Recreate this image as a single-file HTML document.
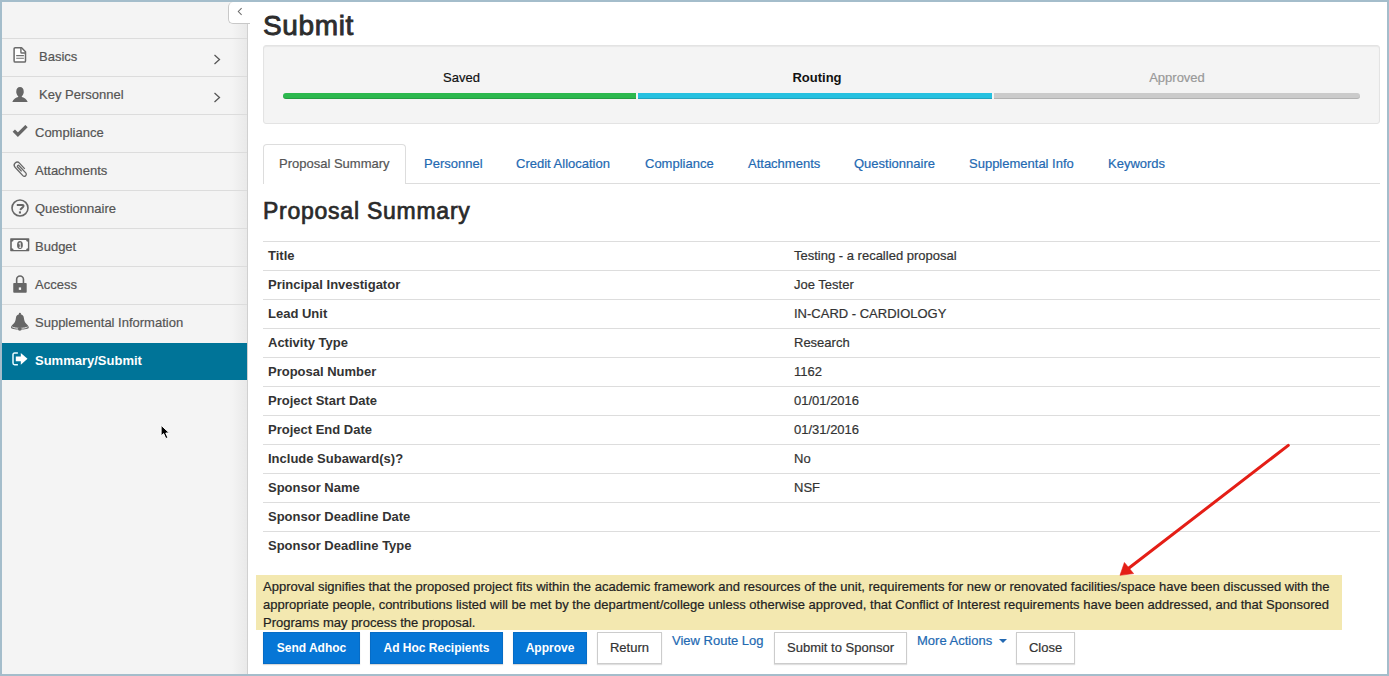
<!DOCTYPE html>
<html><head><meta charset="utf-8">
<style>
*{box-sizing:border-box;margin:0;padding:0}
html,body{width:1389px;height:676px;overflow:hidden}
body{position:relative;background:#a4bdcb;font-family:"Liberation Sans",sans-serif;font-size:13px;color:#333;-webkit-text-stroke:0.2px currentColor}
b,.bp,.act,.bold{-webkit-text-stroke:0}
.a{position:absolute}
#frame{left:2px;top:2px;width:1385px;height:672px;background:#fff}
#side{left:2px;top:2px;width:246px;height:672px;background:linear-gradient(to right,#f4f4f4 0,#f4f4f4 230px,#e9e9e9 245px);border-right:1px solid #d0d0d0}
.sep{left:2px;width:245px;height:1px;background:#dcdcdc}
.it{left:2px;width:245px;height:38px;line-height:38px;color:#555;white-space:nowrap}
.it span{position:absolute;top:0}
.it svg{position:absolute}
.act{background:#007498;color:#fff;font-weight:bold}
.chev{position:absolute}
#collapse{left:228px;top:2px;width:22px;height:22px;background:#fff;border:1px solid #c8c8c8;border-right:none;border-radius:5px 0 0 5px;border-top:none}
h1{position:absolute;left:263px;top:7.5px;font-size:28px;font-weight:normal;-webkit-text-stroke:0.9px #2d2d2d;color:#2d2d2d;line-height:36px;letter-spacing:0.65px}
#well{left:263px;top:45px;width:1117px;height:79px;background:#f4f4f4;border:1px solid #e3e3e3;border-radius:3px;box-shadow:inset 0 1px 1px rgba(0,0,0,.05)}
.bar{top:93px;height:6px}
.lbl{top:69px;line-height:18px;text-align:center;font-size:13px}
.tabline{left:263px;top:183px;width:1117px;height:1px;background:#ddd}
.tab{top:145px;height:40px;line-height:40px;color:#2369b2;white-space:nowrap}
#acttab{left:263px;top:144px;width:143px;height:40px;background:#fff;border:1px solid #ddd;border-bottom:none;border-radius:4px 4px 0 0;color:#555;padding-left:15px}
h2{position:absolute;left:263px;top:196px;font-size:23px;font-weight:normal;-webkit-text-stroke:0.7px #2a2a2a;color:#2a2a2a;line-height:30px;letter-spacing:0.75px}
.row{left:263px;width:1117px;height:29px;border-top:1px solid #ddd;line-height:28px;color:#333}
.row b{position:absolute;left:5px;top:0}
.row i{position:absolute;left:531px;top:0;font-style:normal}
#notice{left:256px;top:575px;width:1086px;height:55px;background:#f3e8b0;color:#222;padding:3px 0 0 7px;line-height:18px}
.btn{top:632px;height:32px;line-height:30px;text-align:center;white-space:nowrap}
.bp{background:#0676d6;color:#fff;font-weight:bold;font-size:12px;border:1px solid #066cc6;box-shadow:0 1px 1px rgba(0,0,0,.15)}
.bd{background:#fff;color:#333;border:1px solid #ccc;box-shadow:0 1px 1px rgba(0,0,0,.12)}
.lnk{top:632px;line-height:17px;color:#2369b2;white-space:nowrap}
</style></head><body>
<div id="frame" class="a"></div>
<div id="side" class="a"></div>
<!-- sidebar separators -->
<div class="a sep" style="top:38px"></div>
<div class="a sep" style="top:76px"></div>
<div class="a sep" style="top:114px"></div>
<div class="a sep" style="top:152px"></div>
<div class="a sep" style="top:190px"></div>
<div class="a sep" style="top:228px"></div>
<div class="a sep" style="top:266px"></div>
<div class="a sep" style="top:304px"></div>

<div class="a it" style="top:38px">
 <svg style="left:11px;top:9px" width="14" height="16" viewBox="0 0 14 16"><path d="M2.2 0.8H8.6L12.5 4.7V14a1.1 1.1 0 0 1-1.1 1.1H2.2A1.1 1.1 0 0 1 1.1 14V1.9A1.1 1.1 0 0 1 2.2 0.8z" fill="#fff" stroke="#6a6a6a" stroke-width="1.5" stroke-linejoin="round"/><path d="M7.9 0.8V5.2a.8.8 0 0 0 .8.8H12.5" fill="none" stroke="#6a6a6a" stroke-width="1.4"/><path d="M3.2 8.6h7.7M3.2 11.3h7.7" stroke="#707070" stroke-width="1.1"/></svg>
 <span style="left:37px">Basics</span>
 <svg class="chev" style="left:211px;top:16px" width="8" height="11" viewBox="0 0 8 11"><path d="M1.5 1l5 4.5-5 4.5" fill="none" stroke="#555" stroke-width="1.25"/></svg>
</div>
<div class="a it" style="top:76px">
 <svg style="left:10px;top:11px" width="16" height="16" viewBox="0 0 16 16"><path d="M8 0.1C10.3 0.1 11.7 1.7 11.7 4.3C11.7 5 11.9 5.4 11.6 6C11.3 7.5 10.5 8.6 9.8 9.2V10C11.8 10.5 14.6 11.8 15.7 14.9H0.3C1.4 11.8 4.2 10.5 6.2 10V9.2C5.5 8.6 4.7 7.5 4.4 6C4.1 5.4 4.3 5 4.3 4.3C4.3 1.7 5.7 0.1 8 0.1z" fill="#666"/></svg>
 <span style="left:37px">Key Personnel</span>
 <svg class="chev" style="left:211px;top:16px" width="8" height="11" viewBox="0 0 8 11"><path d="M1.5 1l5 4.5-5 4.5" fill="none" stroke="#555" stroke-width="1.25"/></svg>
</div>
<div class="a it" style="top:114px">
 <svg style="left:10px;top:11px" width="17" height="13" viewBox="0 0 17 13"><path d="M1.8 5.6L5.9 9.7L14.5 1.1" fill="none" stroke="#666" stroke-width="3.3" stroke-linejoin="miter"/></svg>
 <span style="left:33px">Compliance</span>
</div>
<div class="a it" style="top:152px">
 <svg style="left:8px;top:6px" width="20" height="22" viewBox="0 0 20 22"><path transform="translate(10.8 11) rotate(-43)" d="M3 2.6V-5.2A3 3 0 0 0-3-5.2V6.2A2 2 0 0 0 1 6.2V-3.6A1 1 0 0 0-1-3.6V2.3" fill="none" stroke="#666" stroke-width="1.3"/></svg>
 <span style="left:33px">Attachments</span>
</div>
<div class="a it" style="top:190px">
 <svg style="left:9px;top:9px" width="18" height="18" viewBox="0 0 18 18"><circle cx="9" cy="9" r="8" fill="none" stroke="#666" stroke-width="1.6"/><path d="M5.8 5.9H11.3C12.5 5.9 12.9 6.9 12.2 7.7L9.1 10.9" fill="none" stroke="#666" stroke-width="2"/><rect x="7.9" y="12.4" width="2.1" height="2.1" fill="#666"/></svg>
 <span style="left:33px">Questionnaire</span>
</div>
<div class="a it" style="top:228px">
 <svg style="left:8px;top:10px" width="20" height="14" viewBox="0 0 20 14"><rect x="0.2" y="0.2" width="19.1" height="13" rx="0.6" fill="#666"/><path d="M3.6 1.9H16.1A1.8 1.8 0 0 0 17.9 3.7V10.3A1.8 1.8 0 0 0 16.1 12.1H3.6A1.8 1.8 0 0 0 1.8 10.3V3.7A1.8 1.8 0 0 0 3.6 1.9z" fill="#fafafa"/><ellipse cx="9.95" cy="7" rx="2.9" ry="3.9" fill="#666"/><path d="M10.3 4.6V9.4M8.9 6.2L10.3 4.7M9.2 9.4H11.2" stroke="#e0e0e0" stroke-width="1.1" fill="none"/></svg>
 <span style="left:33px">Budget</span>
</div>
<div class="a it" style="top:266px">
 <svg style="left:11px;top:8px" width="15" height="20" viewBox="0 0 15 20"><path d="M3.65 9.5V5.35A3.4 3.4 0 0 1 10.45 5.35V9.5" fill="none" stroke="#666" stroke-width="1.6"/><rect x="0.25" y="9" width="13.45" height="9.8" rx="0.8" fill="#666"/><rect x="5.8" y="13.4" width="2.3" height="2.5" fill="#f4f4f4"/></svg>
 <span style="left:33px">Access</span>
</div>
<div class="a it" style="top:304px">
 <svg style="left:8px;top:8px" width="20" height="20" viewBox="0 0 20 20"><circle cx="9.9" cy="1.9" r="1.1" fill="#666"/><path d="M5.9 6C6.2 3.6 7.6 2.3 9.9 2.3C12.2 2.3 13.6 3.6 13.9 6C14.2 8.4 14.5 9.5 15.6 11C16.6 12.3 18.8 13.6 18.8 15.4C18.8 16.8 14.8 17.5 9.9 17.5C5 17.5 1 16.8 1 15.4C1 13.6 3.2 12.3 4.2 11C5.3 9.5 5.6 8.4 5.9 6z" fill="#666"/><path d="M2.2 14.9C3.4 15.8 6.4 16.3 9.9 16.3C13.4 16.3 16.4 15.8 17.6 14.9" fill="none" stroke="#eaeaea" stroke-width="1"/><circle cx="9.8" cy="16.8" r="1.9" fill="#666"/></svg>
 <span style="left:33px">Supplemental Information</span>
</div>
<div class="a it act" style="top:343px;height:37px;line-height:36px">
 <svg style="left:10px;top:9px" width="17" height="15" viewBox="0 0 17 15"><path d="M5.9 1H2.6C1.6 1 1 1.6 1 2.6V11.1C1 12.1 1.6 12.7 2.6 12.7H5.9" fill="none" stroke="#e8fbff" stroke-width="1.5"/><path d="M3.8 4.6H8.8V0.9L15.5 6.85L8.8 12.8V9.2H3.8z" fill="#fff"/></svg>
 <span style="left:33px">Summary/Submit</span>
</div>

<div id="collapse" class="a"><svg style="position:absolute;left:8px;top:5px" width="6" height="9" viewBox="0 0 6 9"><path d="M4.6 1.1L1.3 4.5 4.6 7.9" fill="none" stroke="#6a6a6a" stroke-width="1.05"/></svg></div>

<!-- cursor -->
<svg class="a" style="left:158px;top:422px" width="14" height="20" viewBox="0 0 14 20"><path d="M3.1 3.3V14L5.6 11.6L7.8 16.6L9.9 15.7L7.8 11H11.4z" fill="#000" stroke="#fff" stroke-width="1" stroke-linejoin="round"/></svg>

<h1>Submit</h1>

<div id="well" class="a"></div>
<div class="a bar" style="left:283px;width:353px;background:#2cb84e;border-radius:3px 0 0 3px;box-shadow:inset 0 -1px 0 rgba(0,0,0,.15)"></div>
<div class="a bar" style="left:638px;width:354px;background:#25c1e0;box-shadow:inset 0 -1px 0 rgba(0,0,0,.15)"></div>
<div class="a bar" style="left:994px;width:366px;background:#cbcbcb;border-radius:0 3px 3px 0;box-shadow:inset 0 -1px 0 rgba(0,0,0,.12)"></div>
<div class="a lbl" style="left:285px;width:353px;color:#111">Saved</div>
<div class="a lbl bold" style="left:640px;width:354px;color:#111;font-weight:bold">Routing</div>
<div class="a lbl" style="left:994px;width:366px;color:#999">Approved</div>

<div class="a tabline"></div>
<div id="acttab" class="a" style="line-height:38px">Proposal Summary</div>
<div class="a tab" style="left:424px;line-height:38px">Personnel</div>
<div class="a tab" style="left:516px;line-height:38px">Credit Allocation</div>
<div class="a tab" style="left:645px;line-height:38px">Compliance</div>
<div class="a tab" style="left:748px;line-height:38px">Attachments</div>
<div class="a tab" style="left:854px;line-height:38px">Questionnaire</div>
<div class="a tab" style="left:969px;line-height:38px">Supplemental Info</div>
<div class="a tab" style="left:1108px;line-height:38px">Keywords</div>

<h2>Proposal Summary</h2>

<div class="a row" style="top:241px"><b>Title</b><i>Testing - a recalled proposal</i></div>
<div class="a row" style="top:270px"><b>Principal Investigator</b><i>Joe Tester</i></div>
<div class="a row" style="top:299px"><b>Lead Unit</b><i>IN-CARD - CARDIOLOGY</i></div>
<div class="a row" style="top:328px"><b>Activity Type</b><i>Research</i></div>
<div class="a row" style="top:357px"><b>Proposal Number</b><i>1162</i></div>
<div class="a row" style="top:386px"><b>Project Start Date</b><i>01/01/2016</i></div>
<div class="a row" style="top:415px"><b>Project End Date</b><i>01/31/2016</i></div>
<div class="a row" style="top:444px"><b>Include Subaward(s)?</b><i>No</i></div>
<div class="a row" style="top:473px"><b>Sponsor Name</b><i>NSF</i></div>
<div class="a row" style="top:502px"><b>Sponsor Deadline Date</b><i></i></div>
<div class="a row" style="top:531px"><b>Sponsor Deadline Type</b><i></i></div>

<div id="notice" class="a">Approval signifies that the proposed project fits within the academic framework and resources of the unit, requirements for new or renovated facilities/space have been discussed with the<br>appropriate people, contributions listed will be met by the department/college unless otherwise approved, that Conflict of Interest requirements have been addressed, and that Sponsored<br>Programs may process the proposal.</div>

<div class="a btn bp" style="left:263px;width:97px">Send Adhoc</div>
<div class="a btn bp" style="left:370px;width:133px">Ad Hoc Recipients</div>
<div class="a btn bp" style="left:513px;width:74px">Approve</div>
<div class="a btn bd" style="left:597px;width:65px">Return</div>
<div class="a lnk" style="left:672px">View Route Log</div>
<div class="a btn bd" style="left:774px;width:133px">Submit to Sponsor</div>
<div class="a lnk" style="left:917px">More Actions <svg width="8" height="4" viewBox="0 0 8 4" style="vertical-align:middle;margin-left:3px;position:relative;top:-1px"><path d="M0 0h8L4 4z" fill="#2369b2"/></svg></div>
<div class="a btn bd" style="left:1016px;width:59px">Close</div>

<!-- red arrow -->
<svg class="a" style="left:0;top:0" width="1389" height="676" viewBox="0 0 1389 676"><line x1="1288.3" y1="445.4" x2="1129" y2="568" stroke="#e41e16" stroke-width="3" stroke-linecap="round"/><path d="M1120 575.3L1124.4 562.5L1133.6 573.6z" fill="#e41e16" stroke="#e41e16" stroke-width="0.6" stroke-linejoin="round"/></svg>
</body></html>
